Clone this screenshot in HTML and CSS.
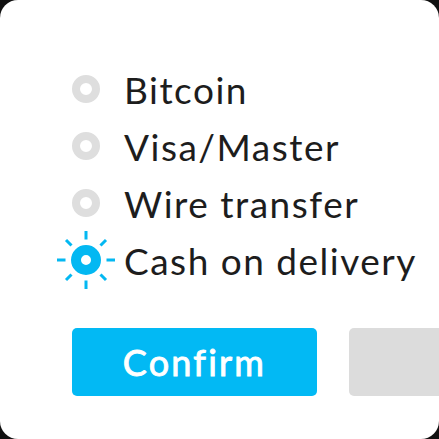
FILE: index.html
```html
<!DOCTYPE html>
<html lang="en">
<head>
<meta charset="utf-8">
<title>Payment method</title>
<link rel="stylesheet" href="styles.css">
</head>
<body>
<main class="card">
  <ul class="options">
    <li class="option">
      <span class="radio"><span class="ring"></span></span>
      <span class="label">Bitcoin</span>
    </li>
    <li class="option">
      <span class="radio"><span class="ring"></span></span>
      <span class="label">Visa/Master</span>
    </li>
    <li class="option">
      <span class="radio"><span class="ring"></span></span>
      <span class="label">Wire transfer</span>
    </li>
    <li class="option selected">
      <span class="radio">
        <svg class="sun" width="30" height="30" viewBox="-15 -15 30 30">
          <g stroke="#03b8f2" stroke-width="3">
            <circle r="10" fill="none" stroke-width="10"/>
            <line x1="0" y1="-20.5" x2="0" y2="-29"/>
            <line x1="0" y1="20.5" x2="0" y2="29"/>
            <line x1="-20.5" y1="0" x2="-29" y2="0"/>
            <line x1="20.5" y1="0" x2="29" y2="0"/>
            <line x1="14.5" y1="-14.5" x2="20" y2="-20"/>
            <line x1="-14.5" y1="-14.5" x2="-20" y2="-20"/>
            <line x1="14.5" y1="14.5" x2="20" y2="20"/>
            <line x1="-14.5" y1="14.5" x2="-20" y2="20"/>
          </g>
        </svg>
      </span>
      <span class="label">Cash on delivery</span>
    </li>
  </ul>
  <div class="actions">
    <button class="btn btn-primary" type="button">Confirm</button>
    <button class="btn btn-secondary" type="button" aria-label="Cancel"></button>
  </div>
</main>
</body>
</html>
```
FILE: styles.css
```css
html, body {
  margin: 0;
  padding: 0;
  background: #111;
}

.card {
  box-sizing: border-box;
  width: 439px;
  height: 439px;
  background: #fff;
  border-radius: 18px;
  overflow: hidden;
  padding: 60.5px 0 0 71px;
  font-family: Lato, "Liberation Sans", sans-serif;
}

.options {
  list-style: none;
  margin: 0;
  padding: 0;
}

.option {
  display: flex;
  align-items: center;
  height: 57px;
  gap: 23px;
}

.radio {
  width: 30px;
  height: 30px;
  flex: none;
  display: flex;
  align-items: center;
  justify-content: center;
}

.ring {
  box-sizing: border-box;
  width: 28px;
  height: 28px;
  border-radius: 50%;
  border: 8px solid #dedede;
}

.sun {
  overflow: visible;
  display: block;
}

.label {
  font-size: 37px;
  letter-spacing: 1.5px;
  color: #1d1d1d;
  line-height: 1;
}

.actions {
  display: flex;
  gap: 32px;
  margin-top: 39.5px;
  padding-left: 1px;
}

.btn {
  flex: none;
  width: 245px;
  height: 68px;
  border: 0;
  border-radius: 5px;
  font-family: Lato, "Liberation Sans", sans-serif;
  font-size: 36px;
  font-weight: 400;
  -webkit-text-stroke: 0.9px #fff;
  letter-spacing: 2.2px;
  padding: 0;
}

.btn-primary {
  background: #02b9f4;
  color: #fff;
}

.btn-secondary {
  background: #dcdcdc;
}
```
